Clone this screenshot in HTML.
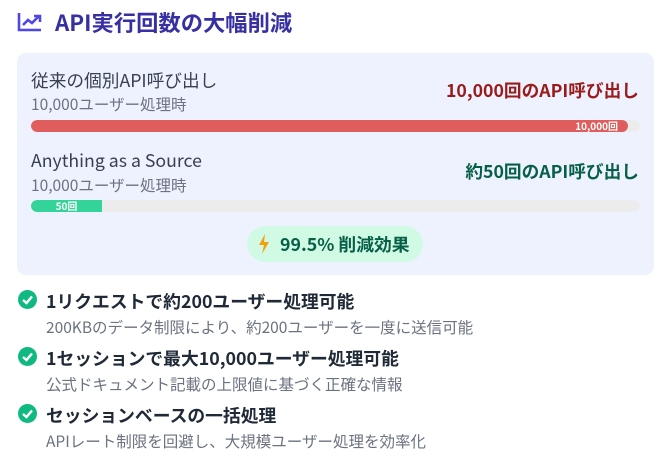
<!DOCTYPE html>
<html><head><meta charset="utf-8"><style>
*{margin:0;padding:0;box-sizing:border-box}
body{width:669px;height:469px;background:#fff;font-family:"Noto Sans CJK JP",sans-serif;position:relative;overflow:hidden}
.a{position:absolute;white-space:nowrap}
.title{left:55px;top:7px;font-size:22.3px;font-weight:bold;color:#3730a3;line-height:30px}
.card{left:17px;top:53px;width:637px;height:222px;background:#eef2ff;border-radius:9px}
.lab{font-size:17.7px;color:#374151;line-height:22px}
.sub{font-size:15.5px;color:#6b7280;line-height:20px}
.track{left:31px;width:609px;height:12px;background:#ececec;border-radius:6px;overflow:hidden}
.fill{position:absolute;left:0;top:0;height:12px;border-radius:6px;font-size:10px;color:#fff;font-weight:bold;line-height:12px;text-align:right;padding-right:10px}
.rt{font-size:17.7px;font-weight:bold;line-height:22px;right:30px}
.badge{left:247px;top:226px;width:176px;height:36px;background:#d1fae5;border-radius:18px;font-size:17.8px;font-weight:bold;color:#065f46;line-height:36px;padding-left:33px}
.ck{position:absolute;left:18px;width:19px;height:19px;border-radius:50%;background:#10b981}
.it{left:46px;font-size:17.8px;font-weight:bold;color:#1f2937;line-height:22px}
.is{left:46px;font-size:15.5px;color:#6b7280;line-height:20px}
</style></head><body>
<svg class="a" style="left:17px;top:12px" width="26" height="20" viewBox="0 0 26 20"><path d="M2 1V18H24" fill="none" stroke="#4f46e5" stroke-width="2.6"/><path d="M6 13L11 8L15 11L22 4" fill="none" stroke="#4f46e5" stroke-width="2.6"/><path d="M17 4H23V10" fill="none" stroke="#4f46e5" stroke-width="2.6"/></svg>
<div class="a title">API実行回数の大幅削減</div>
<div class="a card"></div>
<div class="a lab" style="left:31px;top:69px">従来の個別API呼び出し</div>
<div class="a sub" style="left:31px;top:94px">10,000ユーザー処理時</div>
<div class="a rt" style="top:79px;color:#991b1b">10,000回のAPI呼び出し</div>
<div class="a track" style="top:120px"><div class="fill" style="width:597px;background:#e05d5d">10,000回</div></div>
<div class="a lab" style="left:31px;top:149px">Anything as a Source</div>
<div class="a sub" style="left:31px;top:175px">10,000ユーザー処理時</div>
<div class="a rt" style="top:160px;color:#065f46">約50回のAPI呼び出し</div>
<div class="a track" style="top:200px"><div class="fill" style="width:71px;background:#34d399;border-radius:6px 0 0 6px;text-align:center;padding:0">50回</div></div>
<div class="a badge">99.5% 削減効果</div>
<svg class="a" style="left:258px;top:234px" width="12" height="20" viewBox="0 0 12 20"><path d="M7 0L1 11H6L4 20L11 8H6Z" fill="#f59e0b"/></svg>
<div class="ck" style="top:290px"></div><svg class="a" style="left:18px;top:290px" width="19" height="19"><path d="M5 10L8.5 13L14 6.5" fill="none" stroke="#fff" stroke-width="2.4"/></svg>
<div class="a it" style="top:290px">1リクエストで約200ユーザー処理可能</div>
<div class="a is" style="top:317px">200KBのデータ制限により、約200ユーザーを一度に送信可能</div>
<div class="ck" style="top:347px"></div><svg class="a" style="left:18px;top:347px" width="19" height="19"><path d="M5 10L8.5 13L14 6.5" fill="none" stroke="#fff" stroke-width="2.4"/></svg>
<div class="a it" style="top:347px">1セッションで最大10,000ユーザー処理可能</div>
<div class="a is" style="top:374px">公式ドキュメント記載の上限値に基づく正確な情報</div>
<div class="ck" style="top:404px"></div><svg class="a" style="left:18px;top:404px" width="19" height="19"><path d="M5 10L8.5 13L14 6.5" fill="none" stroke="#fff" stroke-width="2.4"/></svg>
<div class="a it" style="top:404px">セッションベースの一括処理</div>
<div class="a is" style="top:431px">APIレート制限を回避し、大規模ユーザー処理を効率化</div>
</body></html>
